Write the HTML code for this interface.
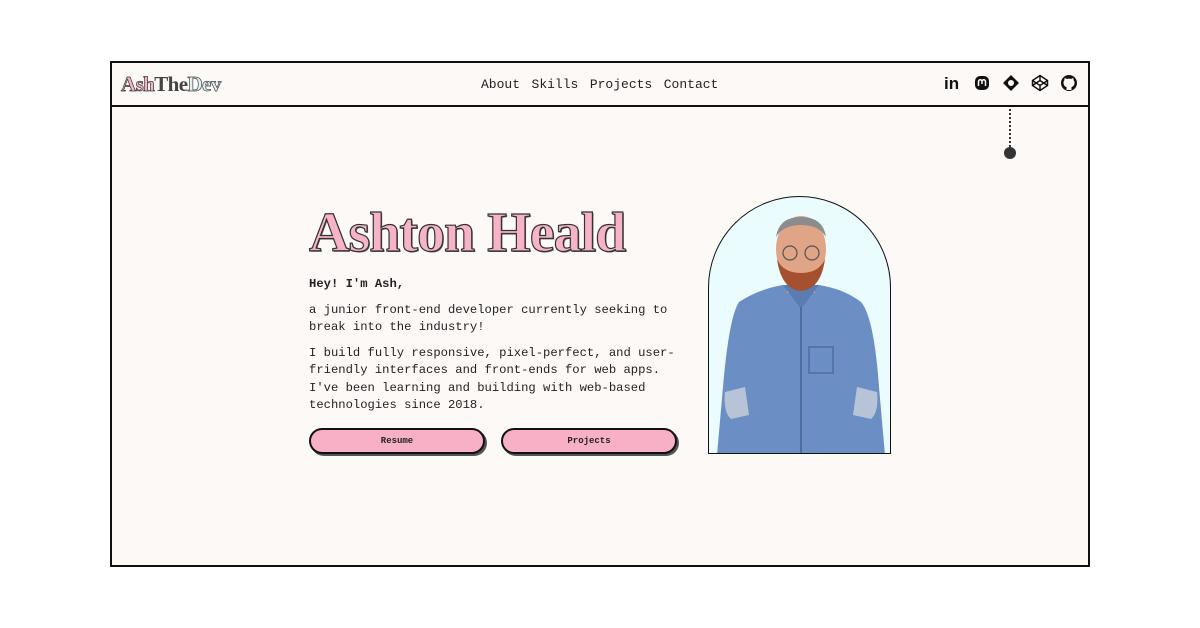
<!DOCTYPE html>
<html><head><style>
*{margin:0;padding:0;box-sizing:border-box}
body{width:1200px;height:628px;background:#fff;position:relative;overflow:hidden;font-family:"Liberation Mono",monospace;color:#222}
.frame{position:absolute;left:110px;top:61px;width:980px;height:506px;border:2px solid #111;background:#fdf9f7}
.nav{position:absolute;left:0;top:0;width:976px;height:44px;border-bottom:2px solid #111}
.logo{position:absolute;left:9px;top:9px;font-family:"Liberation Serif",serif;font-weight:bold;font-size:21px;letter-spacing:-0.6px}
.links{position:absolute;left:369px;top:14px;font-size:13px}
.links span{margin-right:11.5px}
.icons{position:absolute;left:832px;top:11px;display:flex;gap:11px}
.icons svg{width:18px;height:18px}
h1{position:absolute;left:197px;top:138px;font-family:"Liberation Serif",serif;font-weight:bold;font-size:56px;color:#f7b3c8;-webkit-text-stroke:1.2px #333;letter-spacing:-1px;text-shadow:1px 1px 0 #555;white-space:nowrap}
.txt{position:absolute;left:197px;top:213px;width:380px;font-size:12.2px;line-height:17.5px}
.txt p{margin-bottom:8px}
.btn{position:absolute;top:365px;width:176px;height:26px;border:2px solid #111;border-radius:13px;background:#f7b0c6;box-shadow:2px 2px 0 #555;font-size:9px;font-weight:bold;text-align:center;line-height:22px}
.arch{position:absolute;left:596px;top:133px;width:183px;height:258px;border:1.5px solid #111;border-radius:92px 92px 0 0;background:#eafcfe;overflow:hidden}
</style></head><body>
<div class="frame">
 <div class="nav">
  <div class="logo"><span style="color:#f7b3c8;-webkit-text-stroke:0.7px #333">Ash</span><span style="color:#444">The</span><span style="color:#dff3f5;-webkit-text-stroke:0.7px #444">Dev</span></div>
  <div class="links"><span>About</span><span>Skills</span><span>Projects</span><span>Contact</span></div>
  <div class="icons">
   <svg viewBox="0 0 18 18"><text x="0" y="15" font-family="Liberation Sans" font-weight="bold" font-size="17" fill="#111">in</text></svg>
   <svg viewBox="0 0 18 18"><rect x="2" y="2" width="14" height="14" rx="5" fill="#111"/><path d="M5.5 12V7.5a1.7 1.7 0 0 1 3.5 0V10M9 7.5a1.7 1.7 0 0 1 3.5 0V12" stroke="#fdf9f7" stroke-width="1.5" fill="none"/></svg>
   <svg viewBox="0 0 18 18"><path d="M9 1L17 9L9 17L1 9Z" fill="#111"/><circle cx="9" cy="9" r="3" fill="#fdf9f7"/></svg>
   <svg viewBox="0 0 18 18" fill="none" stroke="#111" stroke-width="1.5"><path d="M9 1.5L16.5 6.5V11.5L9 16.5L1.5 11.5V6.5Z"/><path d="M9 1.5V6.5M9 11.5V16.5M1.5 6.5L9 11.5L16.5 6.5M1.5 11.5L9 6.5L16.5 11.5"/></svg>
   <svg viewBox="0 0 18 18"><circle cx="9" cy="9" r="8" fill="#111"/><path d="M6.5 16v-3c-1-.3-3-1-3-4.5 0-1 .4-1.8 1-2.4-.1-.5-.2-1.3.2-2 1 0 1.8.6 2.1.9a6 6 0 0 1 4.4 0c.3-.3 1.100-.9 2.1-.9.4.7.3 1.5.2 2 .6.6 1 1.4 1 2.4 0 3.5-2 4.2-3 4.5v3Z" fill="#fdf9f7"/></svg>
  </div>
 </div>
 <div style="position:absolute;left:897px;top:46px;height:42px;border-left:2px dotted #333"></div>
 <div style="position:absolute;left:892px;top:84px;width:12px;height:12px;border-radius:50%;background:#333"></div>
 <h1>Ashton Heald</h1>
 <div class="txt">
  <p style="font-weight:bold">Hey! I'm Ash,</p>
  <p>a junior front-end developer currently seeking to break into the industry!</p>
  <p>I build fully responsive, pixel-perfect, and user-friendly interfaces and front-ends for web apps. I've been learning and building with web-based technologies since 2018.</p>
 </div>
 <div class="btn" style="left:197px">Resume</div>
 <div class="btn" style="left:389px">Projects</div>
 <div class="arch">
  <svg width="183" height="258" viewBox="0 0 183 258">
   <path d="M8 258 L14 190 Q20 120 30 105 Q50 92 74 88 L110 88 Q135 92 152 105 Q165 120 170 190 L176 258Z" fill="#6b8fc4"/>
   <path d="M16 195 Q14 215 22 222 L40 218 L36 190Z" fill="#b7c4d8"/>
   <path d="M168 195 Q170 215 162 222 L144 218 L148 190Z" fill="#b7c4d8"/>
   <rect x="78" y="78" width="28" height="18" fill="#d99a78"/>
   <path d="M74 88 L92 112 L110 88" fill="#5a7cb0"/>
   <line x1="92" y1="110" x2="92" y2="258" stroke="#4f6d9c" stroke-width="2"/>
   <rect x="100" y="150" width="24" height="26" fill="none" stroke="#4f6d9c" stroke-width="1.5"/>
   <ellipse cx="92" cy="52" rx="25" ry="33" fill="#e0a486"/>
   <path d="M67 40 Q70 20 92 20 Q114 20 117 40 Q110 28 92 28 Q74 28 67 40Z" fill="#8b8c8e"/>
   <path d="M68 62 Q72 92 92 94 Q112 92 116 62 Q110 76 92 76 Q74 76 68 62Z" fill="#a5502e"/>
   <circle cx="81" cy="56" r="7" fill="none" stroke="#555" stroke-width="1.2"/>
   <circle cx="103" cy="56" r="7" fill="none" stroke="#555" stroke-width="1.2"/>
  </svg>
 </div>
</div>
</body></html>
